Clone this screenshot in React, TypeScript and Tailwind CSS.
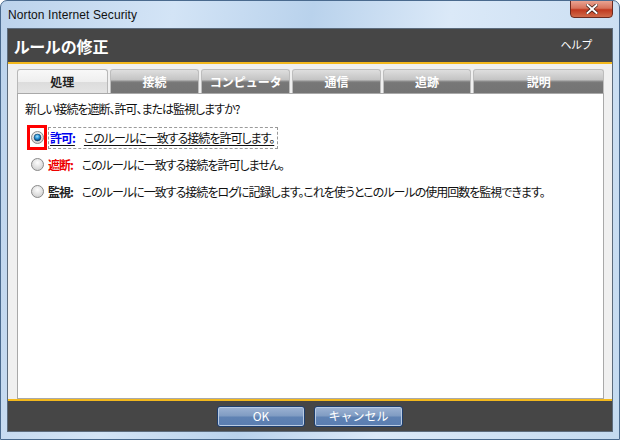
import React from "react";

const jp = "font-['Noto_Sans_CJK_JP','Noto_Sans',sans-serif]";

const tabs = [
  { label: "処理", w: "w-[91px]", active: true },
  { label: "接続", w: "w-[90px]" },
  { label: "コンピュータ", w: "w-[89px]" },
  { label: "通信", w: "w-[89px]" },
  { label: "追跡", w: "w-[89px]" },
  { label: "説明", w: "w-[131px]" },
];

const Radio = ({ checked }: { checked?: boolean }) => (
  <svg width="13" height="13" viewBox="0 0 13 13" className="shrink-0">
    <defs>
      <radialGradient id="rg-off" cx="50%" cy="35%" r="65%">
        <stop offset="0%" stopColor="#fdfdfd" />
        <stop offset="100%" stopColor="#cfcfcf" />
      </radialGradient>
      <radialGradient id="rg-on" cx="45%" cy="35%" r="60%">
        <stop offset="0%" stopColor="#9fe0ff" />
        <stop offset="60%" stopColor="#1d8ad0" />
        <stop offset="100%" stopColor="#0b3f73" />
      </radialGradient>
    </defs>
    <circle cx="6.5" cy="6.5" r="6" fill="url(#rg-off)" stroke="#8a8a8a" strokeWidth="1" />
    {checked && <circle cx="6.5" cy="6.5" r="3.4" fill="url(#rg-on)" stroke="#123a5e" strokeWidth="0.6" />}
  </svg>
);

const GlassButton = ({ label, w }: { label: string; w: string }) => (
  <div
    className={`${w} h-[21px] rounded-[3px] border border-[#1f3f6e] bg-[linear-gradient(#9db3d3_0%,#7f9bc2_48%,#5f82b3_52%,#5a7db0_100%)] shadow-[inset_0_0_0_1px_#b9cbe3] flex items-center justify-center text-white text-[12px] ${jp}`}
  >
    {label}
  </div>
);

const App = () => {
  return (
    <div className="w-[620px] h-[440px] flex flex-col rounded-t-[7px] border border-[#4a6a8e] bg-[linear-gradient(100deg,#bcd3ec_0%,#d3e4f6_25%,#b9d2ec_45%,#dbe9f8_65%,#c4daf0_100%)] overflow-hidden">
      {/* title bar */}
      <div className="h-[27px] flex items-start justify-between pl-[7px]">
        <span className="mt-[5px] text-[12px] text-[#111] font-['Liberation_Sans',sans-serif] tracking-[0.1px]">
          Norton Internet Security
        </span>
        <div className="mr-[6px] w-[43px] h-[18px] mt-[-1px] rounded-b-[4px] border border-[#6b2a20] bg-[linear-gradient(#e9a391_0%,#d7735c_45%,#c0391f_55%,#d06a4a_100%)] flex items-center justify-center">
          <svg width="12" height="10" viewBox="0 0 12 10">
            <path d="M1.5 1 L10.5 9 M10.5 1 L1.5 9" stroke="#3b1a14" strokeWidth="3.4" strokeLinecap="square" />
            <path d="M1.5 1 L10.5 9 M10.5 1 L1.5 9" stroke="#ffffff" strokeWidth="2" strokeLinecap="square" />
          </svg>
        </div>
      </div>

      {/* client */}
      <div className="mx-[6px] w-[606px] flex flex-col border border-[#5c6b7c] bg-[#f0f0f0]">
        <div className="h-[33px] bg-[#464646] flex items-center justify-between px-[6px]">
          <span className={`text-white text-[16px] font-bold ${jp} [font-feature-settings:'palt']`}>ルールの修正</span>
          <span className={`text-white text-[11px] mr-[14px] mt-[-2px] ${jp} [font-feature-settings:'palt']`}>ヘルプ</span>
        </div>
        <div className="h-[2px] bg-[#f3b81c]" />

        <div className="h-[335px] pl-[9px] pr-[8px] pt-[5px] flex flex-col">
          {/* tabs */}
          <div className="flex gap-[2px] h-[24px]">
            {tabs.map((t) =>
              t.active ? (
                <div
                  key={t.label}
                  className={`${t.w} h-full rounded-t-[3px] border border-b-0 border-[#b8b8b8] bg-[linear-gradient(#f8f8f8_0%,#efefef_50%,#dcdcdc_52%,#e4e4e4_100%)] flex items-center justify-center text-[12px] font-bold text-[#222] ${jp}`}
                >
                  {t.label}
                </div>
              ) : (
                <div
                  key={t.label}
                  className={`${t.w} h-full rounded-t-[3px] border border-b-0 border-[#bdbdbd] bg-[linear-gradient(#dedede_0%,#c4c4c4_42%,#8a8a8a_50%,#777777_55%,#747474_100%)] flex items-center justify-center text-[12px] font-bold text-white ${jp}`}
                >
                  {t.label}
                </div>
              )
            )}
          </div>

          {/* content box */}
          <div className={`flex-1 bg-white border border-[#a9a9a9] pl-[7px] pt-[6px] text-[12px] tracking-[-1px] text-[#111] ${jp} [font-feature-settings:'palt']`}>
            <div className="h-[17px] leading-[17px]">新しい接続を遮断、許可、または監視しますか?</div>

            <div className="mt-[8px] flex items-center h-[25px]">
              <div className="ml-[2px] w-[20px] h-[25px] border-[3px] border-[#ff0000] flex items-center justify-center">
                <Radio checked />
              </div>
              <div className="ml-[1px] h-[22px] border border-dashed border-[#9a9a9a] pl-[1px] pr-[3px] flex items-center">
                <span className="underline underline-offset-2">
                  <span className="font-bold text-[#0000ee]">許可:</span>
                  <span className="ml-[9px]">このルールに一致する接続を許可します。</span>
                </span>
              </div>
            </div>

            <div className="mt-[2px] flex items-center h-[25px]">
              <div className="ml-[5px] w-[14px] flex justify-center">
                <Radio />
              </div>
              <span className="ml-[4px] font-bold text-[#ee0000]">遮断:</span>
              <span className="ml-[9px]">このルールに一致する接続を許可しません。</span>
            </div>

            <div className="mt-[2px] flex items-center h-[25px]">
              <div className="ml-[5px] w-[14px] flex justify-center">
                <Radio />
              </div>
              <span className="ml-[4px] font-bold text-[#222]">監視:</span>
              <span className="ml-[9px]">
                このルールに一致する接続をログに記録します。これを使うとこのルールの使用回数を監視できます。
              </span>
            </div>
          </div>
        </div>

        <div className="h-[2px] bg-[#f3b81c]" />
        <div className="h-[30px] bg-[#464646] flex items-center justify-center gap-[9px]">
          <GlassButton label="OK" w="w-[88px]" />
          <GlassButton label="キャンセル" w="w-[89px]" />
        </div>
      </div>
    </div>
  );
};

export default App;
